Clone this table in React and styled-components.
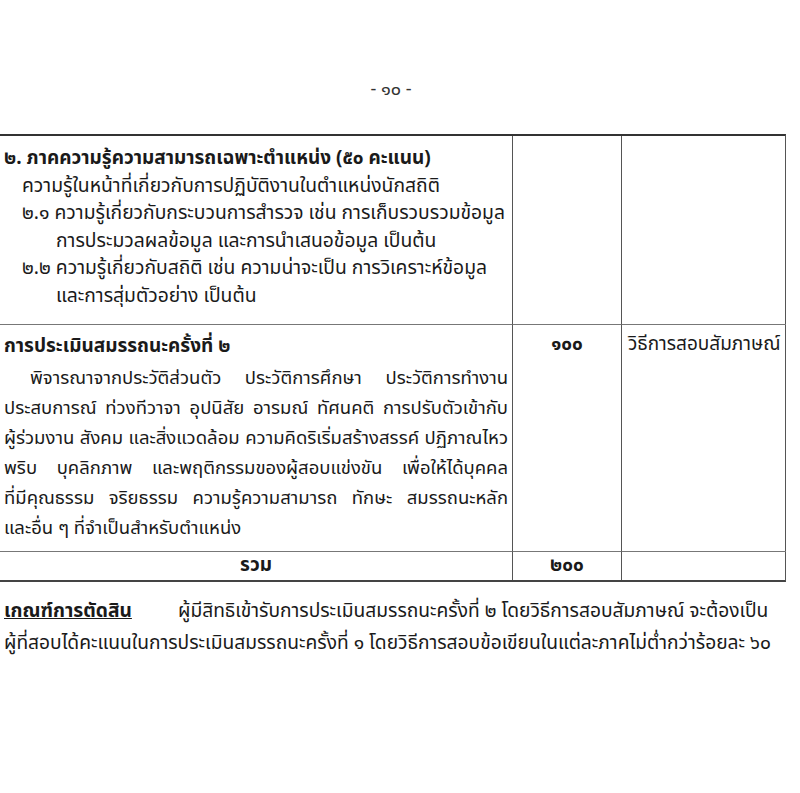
import React from "react";
import styled, { createGlobalStyle } from "styled-components";

const GlobalStyle = createGlobalStyle`
  html, body { margin: 0; padding: 0; background: #fff; }
  body {
    font-family: "Noto Sans Thai", "Noto Sans", "DejaVu Sans", sans-serif;
    color: #1a1a1a;
  }
`;

const Page = styled.div`
  width: 800px;
  height: 793px;
  overflow: hidden;
  background: #fff;
  padding-top: 76px;
  box-sizing: border-box;
`;

const PageNumber = styled.div`
  width: 782px;
  text-align: center;
  font-size: 18px;
  line-height: 28px;
  color: #333;
`;

const Table = styled.div`
  margin-top: 30px;
  width: 786px;
  display: grid;
  grid-template-columns: 512px 109px 165px;
  border-top: 2px solid #333;
  border-bottom: 2px solid #444;
  border-right: 1.5px solid #555;
  box-sizing: border-box;
`;

const Cell = styled.div`
  box-sizing: border-box;
  height: ${(p) => p.$h}px;
  border-left: ${(p) => (p.$first ? "none" : "1.5px solid #555")};
  border-bottom: ${(p) => (p.$last ? "none" : "1.5px solid #777")};
  padding: ${(p) => p.$pad || "8px 4px 0 4px"};
  text-align: ${(p) => p.$align || "left"};
  font-size: 19px;
`;

const Line = styled.div`
  font-size: ${(p) => p.$size || 19.3}px;
  line-height: ${(p) => p.$lh || 27.6}px;
  padding-left: ${(p) => p.$indent || 0}px;
  font-weight: ${(p) => (p.$bold ? 700 : 400)};
  white-space: nowrap;
  text-align: ${(p) => (p.$justify ? "justify" : "left")};
  text-align-last: ${(p) => (p.$justify ? "justify" : "auto")};
`;

const CenterText = styled.div`
  font-size: 19px;
  line-height: 28px;
  font-weight: 700;
  text-align: center;
`;

const Footer = styled.div`
  margin-top: 14px;
  padding-left: 4px;
  width: 780px;
`;

const FooterLine = styled.div`
  font-size: 19.2px;
  line-height: 32px;
  white-space: nowrap;
`;

const Underlined = styled.span`
  font-weight: 700;
  text-decoration: underline;
  display: inline-block;
  width: 174px;
`;

export default function App() {
  return (
    <>
      <GlobalStyle />
      <Page>
        <PageNumber>- ๑๐ -</PageNumber>
        <Table>
          <Cell $first $h={189} $pad="9px 4px 0 4px">
            <Line $bold $size={19}>๒. ภาคความรู้ความสามารถเฉพาะตำแหน่ง (๕๐ คะแนน)</Line>
            <Line $indent={18}>ความรู้ในหน้าที่เกี่ยวกับการปฏิบัติงานในตำแหน่งนักสถิติ</Line>
            <Line $indent={18}>๒.๑ ความรู้เกี่ยวกับกระบวนการสำรวจ เช่น การเก็บรวบรวมข้อมูล</Line>
            <Line $indent={52}>การประมวลผลข้อมูล และการนำเสนอข้อมูล เป็นต้น</Line>
            <Line $indent={18}>๒.๒ ความรู้เกี่ยวกับสถิติ เช่น ความน่าจะเป็น การวิเคราะห์ข้อมูล</Line>
            <Line $indent={52}>และการสุ่มตัวอย่าง เป็นต้น</Line>
          </Cell>
          <Cell $h={189} />
          <Cell $h={189} />
          <Cell $first $h={227} $pad="6px 4px 0 4px">
            <Line $bold $size={19} $lh={32}>การประเมินสมรรถนะครั้งที่ ๒</Line>
            <Line $justify $size={18.5} $lh={30} $indent={26}>พิจารณาจากประวัติส่วนตัว ประวัติการศึกษา ประวัติการทำงาน</Line>
            <Line $justify $size={18.5} $lh={30}>ประสบการณ์ ท่วงทีวาจา อุปนิสัย อารมณ์ ทัศนคติ การปรับตัวเข้ากับ</Line>
            <Line $justify $size={18.5} $lh={30}>ผู้ร่วมงาน สังคม และสิ่งแวดล้อม ความคิดริเริ่มสร้างสรรค์ ปฏิภาณไหว</Line>
            <Line $justify $size={18.5} $lh={30}>พริบ บุคลิกภาพ และพฤติกรรมของผู้สอบแข่งขัน เพื่อให้ได้บุคคล</Line>
            <Line $justify $size={18.5} $lh={30}>ที่มีคุณธรรม จริยธรรม ความรู้ความสามารถ ทักษะ สมรรถนะหลัก</Line>
            <Line $size={18.5} $lh={30}>และอื่น ๆ ที่จำเป็นสำหรับตำแหน่ง</Line>
          </Cell>
          <Cell $h={227} $pad="6px 4px 0 4px">
            <CenterText>๑๐๐</CenterText>
          </Cell>
          <Cell $h={227} $pad="6px 4px 0 6px">
            <Line $size={19}>วิธีการสอบสัมภาษณ์</Line>
          </Cell>
          <Cell $first $last $h={28} $pad="0 4px">
            <CenterText>รวม</CenterText>
          </Cell>
          <Cell $last $h={28} $pad="0 4px">
            <CenterText>๒๐๐</CenterText>
          </Cell>
          <Cell $last $h={28} />
        </Table>
        <Footer>
          <FooterLine>
            <Underlined>เกณฑ์การตัดสิน</Underlined>
            ผู้มีสิทธิเข้ารับการประเมินสมรรถนะครั้งที่ ๒ โดยวิธีการสอบสัมภาษณ์ จะต้องเป็น
          </FooterLine>
          <FooterLine>
            ผู้ที่สอบได้คะแนนในการประเมินสมรรถนะครั้งที่ ๑ โดยวิธีการสอบข้อเขียนในแต่ละภาคไม่ต่ำกว่าร้อยละ ๖๐
          </FooterLine>
        </Footer>
      </Page>
    </>
  );
}
